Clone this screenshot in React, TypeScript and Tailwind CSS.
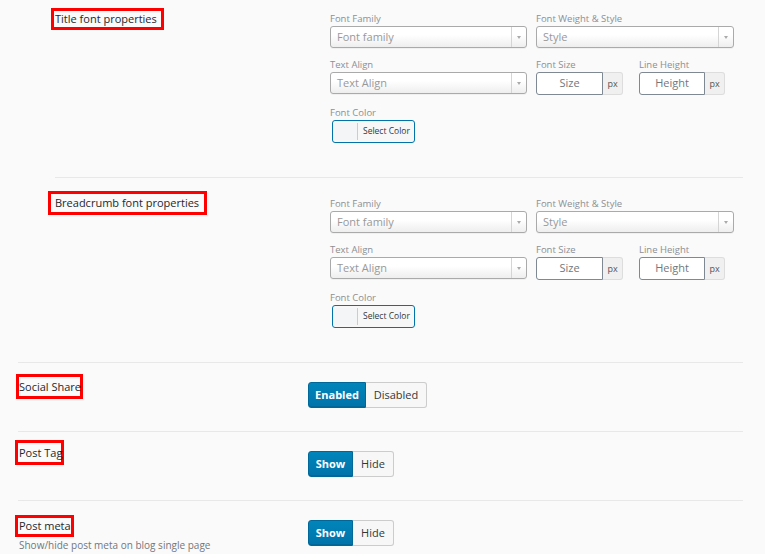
import React, { FC } from "react";

const Label: FC<{ text: string }> = ({ text }) => (
  <div className="h-[14px] text-[9.5px] leading-[13px] text-[#8c8f94] whitespace-nowrap">
    {text}
  </div>
);

const SelectBox: FC<{ placeholder: string; width: string }> = ({
  placeholder,
  width,
}) => (
  <div
    className={`${width} h-[22px] flex items-stretch rounded-[3px] border border-[#aaaaaa] bg-linear-to-b from-white from-40% to-[#eeeeee] shadow-[0_1px_0_rgba(0,0,0,0.04)]`}
  >
    <div className="flex-1 flex items-center pl-[6px] pb-[1px] text-[11px] text-[#999] leading-none">
      {placeholder}
    </div>
    <div className="w-[15px] border-l border-[#d5d5d5] flex items-center justify-center">
      <div className="w-0 h-0 border-l-[2.5px] border-r-[2.5px] border-t-[3px] border-l-transparent border-r-transparent border-t-[#aaa]" />
    </div>
  </div>
);

const UnitInput: FC<{ placeholder: string; width: string }> = ({
  placeholder,
  width,
}) => (
  <div className="flex h-[23px]">
    <div
      className={`${width} flex items-center justify-center bg-white border border-[#7e8993] rounded-l-[3px] text-[11px] text-[#72777c]`}
    >
      {placeholder}
    </div>
    <div className="w-[20px] flex items-center justify-center bg-[#f0f0f0] border border-l-0 border-[#dddddd] rounded-r-[3px] text-[9px] text-[#555]">
      px
    </div>
  </div>
);

const ColorButton: FC = () => (
  <div className="ml-[2px] w-[83px] h-[23px] flex rounded-[3px] border border-[#0073aa] bg-[#f7f7f7] overflow-hidden">
    <div className="w-[25px] bg-[#f3f5f6] border-r border-[#cccccc] my-[2px]" />
    <div className="flex-1 flex items-center pl-[5px] text-[8.5px] text-[#32373c] whitespace-nowrap">
      Select Color
    </div>
  </div>
);

const Marked: FC<{ text: string; box: string }> = ({ text, box }) => (
  <div
    className={`${box} inline-flex items-center border-[3px] border-[#ff0000] text-[11px] text-[#23282d] whitespace-nowrap leading-none`}
  >
    {text}
  </div>
);

const FontSection: FC<{ title: string; box: string; top: string; leftTop: string }> = ({
  title,
  box,
  top,
  leftTop,
}) => (
  <div className="flex pb-[34px]">
    <div className={`w-[275px] ${leftTop}`}>
      <Marked text={title} box={box} />
    </div>
    <div className={`flex flex-col ${top}`}>
      <div className="flex gap-[9px]">
        <div>
          <Label text="Font Family" />
          <SelectBox placeholder="Font family" width="w-[197px]" />
        </div>
        <div>
          <Label text="Font Weight & Style" />
          <SelectBox placeholder="Style" width="w-[198px]" />
        </div>
      </div>
      <div className="flex mt-[10px]">
        <div>
          <Label text="Text Align" />
          <SelectBox placeholder="Text Align" width="w-[197px]" />
        </div>
        <div className="ml-[9px]">
          <Label text="Font Size" />
          <UnitInput placeholder="Size" width="w-[67px]" />
        </div>
        <div className="ml-[16px]">
          <Label text="Line Height" />
          <UnitInput placeholder="Height" width="w-[66px]" />
        </div>
      </div>
      <div className="mt-[11px]">
        <Label text="Font Color" />
        <ColorButton />
      </div>
    </div>
  </div>
);

const Toggle: FC<{ on: string; off: string; onW: string; offW: string }> = ({
  on,
  off,
  onW,
  offW,
}) => (
  <div className="flex h-[26px] text-[11px]">
    <div
      className={`${onW} flex items-center justify-center font-bold text-white bg-linear-to-b from-[#0085ba] to-[#0073aa] border border-[#006799] rounded-l-[3px] shadow-[inset_0_-1px_0_#006799]`}
    >
      {on}
    </div>
    <div
      className={`${offW} flex items-center justify-center text-[#32373c] bg-[#f7f7f7] border border-l-0 border-[#cccccc] rounded-r-[3px]`}
    >
      {off}
    </div>
  </div>
);

const SwitchRow: FC<{
  title: string;
  box: string;
  leftTop: string;
  desc?: string;
  on: string;
  off: string;
  onW: string;
  offW: string;
}> = ({ title, box, leftTop, desc, on, off, onW, offW }) => (
  <div className="flex pb-[23px]">
    <div className={`w-[290px] ${leftTop}`}>
      <Marked text={title} box={box} />
      {desc && (
        <div className="pl-[1px] mt-[1px] text-[10px] text-[#72777c] whitespace-nowrap">
          {desc}
        </div>
      )}
    </div>
    <div className="pt-[19px]">
      <Toggle on={on} off={off} onW={onW} offW={offW} />
    </div>
  </div>
);

const Line: FC = () => <div className="h-px bg-[#e8e8e8]" />;

const App: FC = () => {
  return (
    <div
      className="w-[765px] h-[554px] overflow-hidden bg-[#fafafa]"
      style={{ fontFamily: '"Open Sans", "Liberation Sans", sans-serif' }}
    >
      <div className="pl-[55px] pr-[22px]">
        <FontSection
          title="Title font properties"
          box="-ml-[4px] w-[113px] h-[22px] pl-[1px]"
          top="pt-[12px]"
          leftTop="pt-[5px]"
        />
        <Line />
        <FontSection
          title="Breadcrumb font properties"
          box="-ml-[7px] w-[159px] h-[24px] pl-[4px]"
          top="pt-[19px]"
          leftTop="pt-[11px]"
        />
      </div>
      <div className="pl-[18px] pr-[22px]">
        <Line />
        <SwitchRow
          title="Social Share"
          box="-ml-[2px] w-[67px] h-[25px]"
          leftTop="pt-[10px]"
          on="Enabled"
          off="Disabled"
          onW="w-[58px]"
          offW="w-[61px]"
        />
        <Line />
        <SwitchRow
          title="Post Tag"
          box="-ml-[3px] w-[49px] h-[25px] pl-[1px]"
          leftTop="pt-[7px]"
          on="Show"
          off="Hide"
          onW="w-[45px]"
          offW="w-[41px]"
        />
        <Line />
        <SwitchRow
          title="Post meta"
          box="-ml-[3px] w-[59px] h-[22px] pl-[1px]"
          leftTop="pt-[11px]"
          desc="Show/hide post meta on blog single page"
          on="Show"
          off="Hide"
          onW="w-[45px]"
          offW="w-[41px]"
        />
      </div>
    </div>
  );
};

export default App;
